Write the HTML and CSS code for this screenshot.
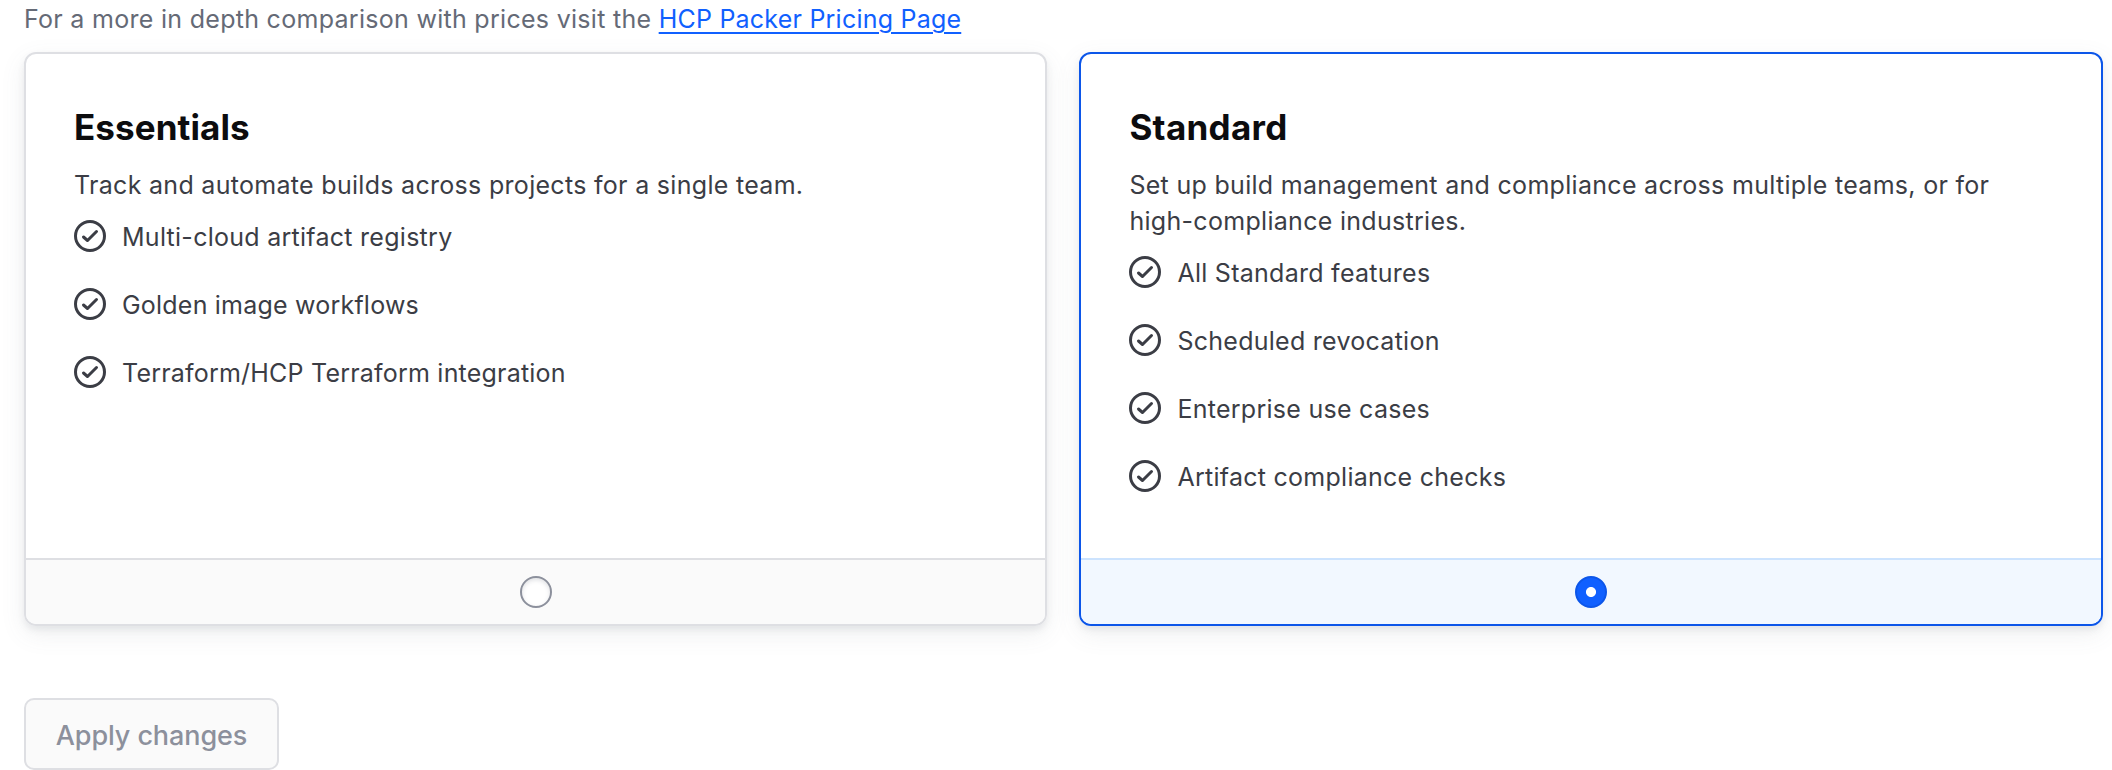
FILE: index.html
```html
<!DOCTYPE html>
<html lang="en">
<head>
<meta charset="utf-8">
<title>HCP Packer plans</title>
<link rel="stylesheet" href="styles.css">
</head>
<body>
<svg class="sprite" aria-hidden="true">
  <symbol id="check-circle" viewBox="0 0 16 16">
    <g fill="none" stroke="currentColor" stroke-width="1.5">
      <circle cx="8" cy="8" r="7.25"/>
      <path d="M4.75 8.5 6.75 10.25 11.25 5.75" stroke-linecap="round" stroke-linejoin="round"/>
    </g>
  </symbol>
</svg>
<main class="page">
  <p class="intro">For a more in depth comparison with prices visit the <a class="link" href="#">HCP Packer Pricing Page</a></p>
  <div class="plans">
    <label class="card">
      <span class="card-body">
        <span class="title">Essentials</span>
        <span class="desc">Track and automate builds across projects for a single team.</span>
        <span class="features">
          <span class="feature"><svg class="icon"><use href="#check-circle"/></svg><span>Multi-cloud artifact registry</span></span>
          <span class="feature feature-tight"><svg class="icon"><use href="#check-circle"/></svg><span>Golden image workflows</span></span>
          <span class="feature feature-tight"><svg class="icon"><use href="#check-circle"/></svg><span>Terraform/HCP Terraform integration</span></span>
        </span>
      </span>
      <span class="card-footer"><input class="radio" type="radio" name="plan"></span>
    </label>
    <label class="card card-selected">
      <span class="card-body">
        <span class="title">Standard</span>
        <span class="desc">Set up build management and compliance across multiple teams, or for<br>high-compliance industries.</span>
        <span class="features">
          <span class="feature"><svg class="icon"><use href="#check-circle"/></svg><span>All Standard features</span></span>
          <span class="feature"><svg class="icon"><use href="#check-circle"/></svg><span>Scheduled revocation</span></span>
          <span class="feature"><svg class="icon"><use href="#check-circle"/></svg><span>Enterprise use cases</span></span>
          <span class="feature"><svg class="icon"><use href="#check-circle"/></svg><span>Artifact compliance checks</span></span>
        </span>
      </span>
      <span class="card-footer"><input class="radio" type="radio" name="plan" checked></span>
    </label>
  </div>
  <button class="apply" disabled>Apply changes</button>
</main>
</body>
</html>
```
FILE: styles.css
```css
* { box-sizing: border-box; }
body {
  margin: 0;
  background: #fff;
  color: #3b3d45;
  font: 400 25px/36px Inter, "Liberation Sans", sans-serif;
  letter-spacing: .3px;
  height: 770px;
  overflow: hidden;
}
.sprite { display: none; }
.page { padding: 1px 9px 0 24px; }
.intro { margin: 0 0 15px; color: #656a76; letter-spacing: .29px; }
.link {
  color: #1060ff;
  letter-spacing: .22px;
  text-decoration: underline;
  text-decoration-thickness: 2px;
  text-underline-offset: 4px;
}
.plans {
  display: grid;
  grid-template-columns: 1023.4px 1fr;
  gap: 32px;
  height: 574px;
}
.card {
  display: flex;
  flex-direction: column;
  border: 2px solid #dedfe3;
  border-radius: 12px;
  overflow: hidden;
  box-shadow: 0 4px 6px rgba(101, 106, 118, .1), 0 8px 24px rgba(101, 106, 118, .1);
}
.card-selected { border-color: #0c56e9; }
.card-body {
  flex: 1;
  display: flex;
  flex-direction: column;
  padding: 48px 48px 0;
}
.title {
  color: #0c0c0e;
  font-size: 35px;
  font-weight: 700;
  line-height: 50px;
  letter-spacing: .1px;
  margin-bottom: 15px;
}
.card-selected .title { letter-spacing: .3px; }
.features {
  display: flex;
  flex-direction: column;
  gap: 36px;
  margin-top: 17px;
}
.feature { display: flex; align-items: flex-start; gap: 16px; height: 32px; line-height: 34px; letter-spacing: .27px; }
.feature-tight { letter-spacing: .21px; }
.icon { width: 32px; height: 32px; flex: none; }
.card-footer {
  display: flex;
  align-items: center;
  justify-content: center;
  height: 66px;
  border-top: 2px solid #dedfe3;
  background: #fafafa;
}
.card-selected .card-footer { border-color: #cce3fe; background: #f2f8ff; }
.radio {
  appearance: none;
  width: 32px;
  height: 32px;
  margin: 0;
  border: 2px solid #8c909c;
  border-radius: 50%;
  background: #fff;
  box-shadow: inset 0 2px 4px rgba(101, 106, 118, .2);
}
.radio:checked {
  border-color: #0c56e9;
  background: radial-gradient(circle, #fff 4.6px, #1060ff 5.4px);
  box-shadow: none;
}
.apply {
  display: block;
  width: 255px;
  height: 72px;
  margin-top: 72px;
  padding: 3px 0 0;
  border: 2px solid #dedfe3;
  border-radius: 10px;
  background: #fafafa;
  color: #8c909c;
  font: 500 27px/40px Inter, "Liberation Sans", sans-serif;
  letter-spacing: -.1px;
}
```
